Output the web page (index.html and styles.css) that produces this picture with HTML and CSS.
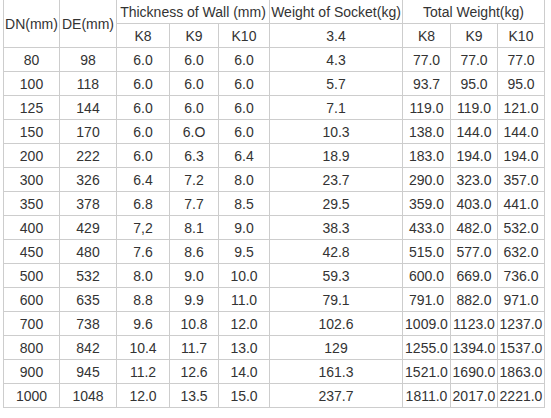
FILE: index.html
```html
<!DOCTYPE html>
<html lang="en">
<head>
  <meta charset="UTF-8">
  <meta name="viewport" content="width=device-width, initial-scale=1.0">
  <title>Pipe Weight Table</title>
  <link rel="stylesheet" href="styles.css">
</head>
<body>
  <table class="spec-table">
    <colgroup>
      <col class="c-dn">
      <col class="c-de">
      <col class="c-k8">
      <col class="c-k9">
      <col class="c-k10">
      <col class="c-sock">
      <col class="c-tk8">
      <col class="c-tk9">
      <col class="c-tk10">
    </colgroup>
    <tr>
      <td rowspan="2">DN(mm)</td>
      <td rowspan="2">DE(mm)</td>
      <td colspan="3">Thickness of Wall (mm)</td>
      <td>Weight of Socket(kg)</td>
      <td colspan="3">Total Weight(kg)</td>
    </tr>
    <tr>
      <td>K8</td><td>K9</td><td>K10</td>
      <td>3.4</td>
      <td>K8</td><td>K9</td><td>K10</td>
    </tr>
    <tr><td>80</td><td>98</td><td>6.0</td><td>6.0</td><td>6.0</td><td>4.3</td><td>77.0</td><td>77.0</td><td>77.0</td></tr>
    <tr><td>100</td><td>118</td><td>6.0</td><td>6.0</td><td>6.0</td><td>5.7</td><td>93.7</td><td>95.0</td><td>95.0</td></tr>
    <tr><td>125</td><td>144</td><td>6.0</td><td>6.0</td><td>6.0</td><td>7.1</td><td>119.0</td><td>119.0</td><td>121.0</td></tr>
    <tr><td>150</td><td>170</td><td>6.0</td><td>6.O</td><td>6.0</td><td>10.3</td><td>138.0</td><td>144.0</td><td>144.0</td></tr>
    <tr><td>200</td><td>222</td><td>6.0</td><td>6.3</td><td>6.4</td><td>18.9</td><td>183.0</td><td>194.0</td><td>194.0</td></tr>
    <tr><td>300</td><td>326</td><td>6.4</td><td>7.2</td><td>8.0</td><td>23.7</td><td>290.0</td><td>323.0</td><td>357.0</td></tr>
    <tr><td>350</td><td>378</td><td>6.8</td><td>7.7</td><td>8.5</td><td>29.5</td><td>359.0</td><td>403.0</td><td>441.0</td></tr>
    <tr><td>400</td><td>429</td><td>7,2</td><td>8.1</td><td>9.0</td><td>38.3</td><td>433.0</td><td>482.0</td><td>532.0</td></tr>
    <tr><td>450</td><td>480</td><td>7.6</td><td>8.6</td><td>9.5</td><td>42.8</td><td>515.0</td><td>577.0</td><td>632.0</td></tr>
    <tr><td>500</td><td>532</td><td>8.0</td><td>9.0</td><td>10.0</td><td>59.3</td><td>600.0</td><td>669.0</td><td>736.0</td></tr>
    <tr><td>600</td><td>635</td><td>8.8</td><td>9.9</td><td>11.0</td><td>79.1</td><td>791.0</td><td>882.0</td><td>971.0</td></tr>
    <tr><td>700</td><td>738</td><td>9.6</td><td>10.8</td><td>12.0</td><td>102.6</td><td>1009.0</td><td>1123.0</td><td>1237.0</td></tr>
    <tr><td>800</td><td>842</td><td>10.4</td><td>11.7</td><td>13.0</td><td>129</td><td>1255.0</td><td>1394.0</td><td>1537.0</td></tr>
    <tr><td>900</td><td>945</td><td>11.2</td><td>12.6</td><td>14.0</td><td>161.3</td><td>1521.0</td><td>1690.0</td><td>1863.0</td></tr>
    <tr><td>1000</td><td>1048</td><td>12.0</td><td>13.5</td><td>15.0</td><td>237.7</td><td>1811.0</td><td>2017.0</td><td>2221.0</td></tr>
  </table>
</body>
</html>
```

FILE: styles.css
```css
body {
  margin: 0;
  background: #fff;
  font-family: "Liberation Sans", Arial, sans-serif;
  color: #333;
}

.spec-table {
  border-collapse: collapse;
  table-layout: fixed;
  width: 542px;
  margin: -1px 0 0 3px;
  font-size: 14px;
}

.spec-table td {
  border: 1px solid #cdcdcd;
  height: 23px;
  padding: 0;
  text-align: center;
  vertical-align: middle;
  white-space: nowrap;
}

.c-dn { width: 56px; }
.c-de { width: 57px; }
.c-k8 { width: 53px; }
.c-k9 { width: 49px; }
.c-k10 { width: 51px; }
.c-sock { width: 133px; }
.c-tk8 { width: 48px; }
.c-tk9 { width: 47px; }
.c-tk10 { width: 47px; }
```
